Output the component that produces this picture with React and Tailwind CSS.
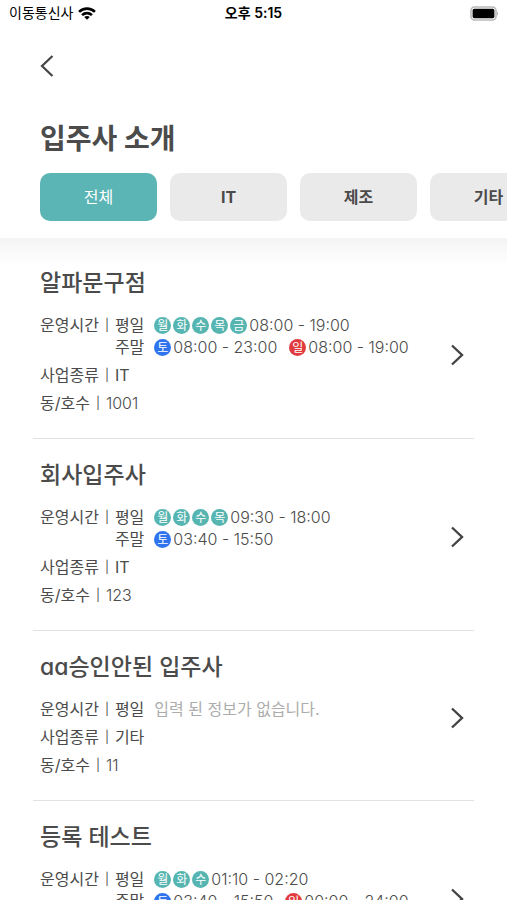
import React, { useState } from 'react';

const CATEGORIES = ['전체', 'IT', '제조', '기타'];

const COMPANIES = [
  {
    name: '알파문구점',
    weekday: { days: ['월', '화', '수', '목', '금'], time: '08:00 - 19:00' },
    sat: '08:00 - 23:00',
    sun: '08:00 - 19:00',
    type: 'IT',
    room: '1001',
  },
  {
    name: '회사입주사',
    weekday: { days: ['월', '화', '수', '목'], time: '09:30 - 18:00' },
    sat: '03:40 - 15:50',
    type: 'IT',
    room: '123',
  },
  { name: 'aa승인안된 입주사', type: '기타', room: '11' },
  {
    name: '등록 테스트',
    weekday: { days: ['월', '화', '수'], time: '01:10 - 02:20' },
    sat: '03:40 - 15:50',
    sun: '00:00 - 24:00',
    type: 'IT',
    room: '102',
  },
];

const StatusBar = () => (
  <div className="grid grid-cols-3 items-center h-[26px] px-[9px] text-sm text-black">
    <div className="flex items-center gap-[5px]">
      <span>이동통신사</span>
      <svg width="18" height="13" viewBox="0 0 20 14" fill="none" stroke="#000" strokeWidth="2.9">
        <path d="M1.2 5.2C6 0.4 14 0.4 18.8 5.2" />
        <path d="M4.5 8.8C7.6 5.8 12.4 5.8 15.5 8.8" />
        <path d="M10 14L6.9 10.9C8.6 9.3 11.4 9.3 13.1 10.9Z" fill="#000" stroke="none" />
      </svg>
    </div>
    <span className="text-center font-semibold">오후 5:15</span>
    <svg className="justify-self-end" width="28" height="15" viewBox="0 0 28 15">
      <rect x="1" y="1" width="25" height="13" rx="3.5" fill="#fff" stroke="#b9b9b9" strokeWidth="1.6" />
      <rect x="2.6" y="2.8" width="21.8" height="9.4" rx="1.6" fill="#000" />
      <path d="M27 5.3C28.4 6 28.4 9 27 9.7Z" fill="#b5b5b5" />
    </svg>
  </div>
);

const DayBadge = ({ day }) => {
  const color = day === '토' ? 'bg-[#2f74ee]' : day === '일' ? 'bg-[#e03c3f]' : 'bg-[#56b5b1]';
  return (
    <span className={`flex items-center justify-center size-[17px] rounded-full text-xs leading-[17px] text-white ${color}`}>
      {day}
    </span>
  );
};

const Hours = ({ days, time }) => (
  <span className="flex items-center gap-[2px]">
    {days.map((day) => <DayBadge key={day} day={day} />)}
    <span className="font-light">{time}</span>
  </span>
);

const Bar = () => <span className="w-4 text-center text-xs leading-[22px]">|</span>;

const CompanyCard = ({ company }) => (
  <li className="group border-b border-[#e2e2e2]">
    <a href="#" className="flex items-center justify-between pl-[7px] pr-[10px] pt-5 pb-6 group-first:pt-0">
      <div>
        <h2 className="text-[23px] leading-8 font-medium mb-[15px]">{company.name}</h2>
        <div className="flex flex-col gap-[6px] text-base leading-[22px]">
          <div className="flex">
            <span>운영시간</span>
            <Bar />
            <div>
              <div className="flex gap-[10px]">
                <span>평일</span>
                {company.weekday
                  ? <Hours days={company.weekday.days} time={company.weekday.time} />
                  : <span className="text-[#acacac]">입력 된 정보가 없습니다.</span>}
              </div>
              {company.sat && (
                <div className="flex gap-[10px]">
                  <span>주말</span>
                  <div className="flex gap-3">
                    <Hours days={['토']} time={company.sat} />
                    {company.sun && <Hours days={['일']} time={company.sun} />}
                  </div>
                </div>
              )}
            </div>
          </div>
          <div className="flex"><span>사업종류</span><Bar /><span>{company.type}</span></div>
          <div className="flex"><span>동/호수</span><Bar /><span className="font-light">{company.room}</span></div>
        </div>
      </div>
      <svg className="shrink-0 mt-2 group-first:mt-7" width="14" height="22" viewBox="0 0 14 22" fill="none" stroke="#444" strokeWidth="2.4">
        <path d="M2 1.5L12 11L2 20.5" />
      </svg>
    </a>
  </li>
);

const App = () => {
  const [category, setCategory] = useState('전체');
  return (
    <div className="h-screen overflow-hidden bg-white text-[#4b4b4b] font-[Inter,'Noto_Sans_CJK_KR',sans-serif] [font-feature-settings:'cv11']">
      <StatusBar />
      <header>
        <button type="button" aria-label="뒤로" className="block ml-10 mt-[29px]">
          <svg width="14" height="22" viewBox="0 0 14 22" fill="none" stroke="#444" strokeWidth="2.2">
            <path d="M12.5 1L2 11L12.5 21" />
          </svg>
        </button>
        <h1 className="mt-[42px] px-10 text-[28px] leading-10 font-bold">입주사 소개</h1>
        <div className="flex gap-[13px] mt-[14px] pl-10 pb-[17px] overflow-hidden">
          {CATEGORIES.map((item) => (
            <button
              key={item}
              type="button"
              onClick={() => setCategory(item)}
              className={`shrink-0 w-[117px] h-12 rounded-[10px] text-base ${category === item ? 'bg-[#5bb5b5] text-white' : 'bg-[#eaeaea] font-bold'}`}
            >
              {item}
            </button>
          ))}
        </div>
      </header>
      <div className="h-[29px] bg-linear-to-b from-[#f4f4f4] to-white" />
      <ul className="px-[33px]">
        {COMPANIES.map((company) => <CompanyCard key={company.name} company={company} />)}
      </ul>
    </div>
  );
};

export default App;
